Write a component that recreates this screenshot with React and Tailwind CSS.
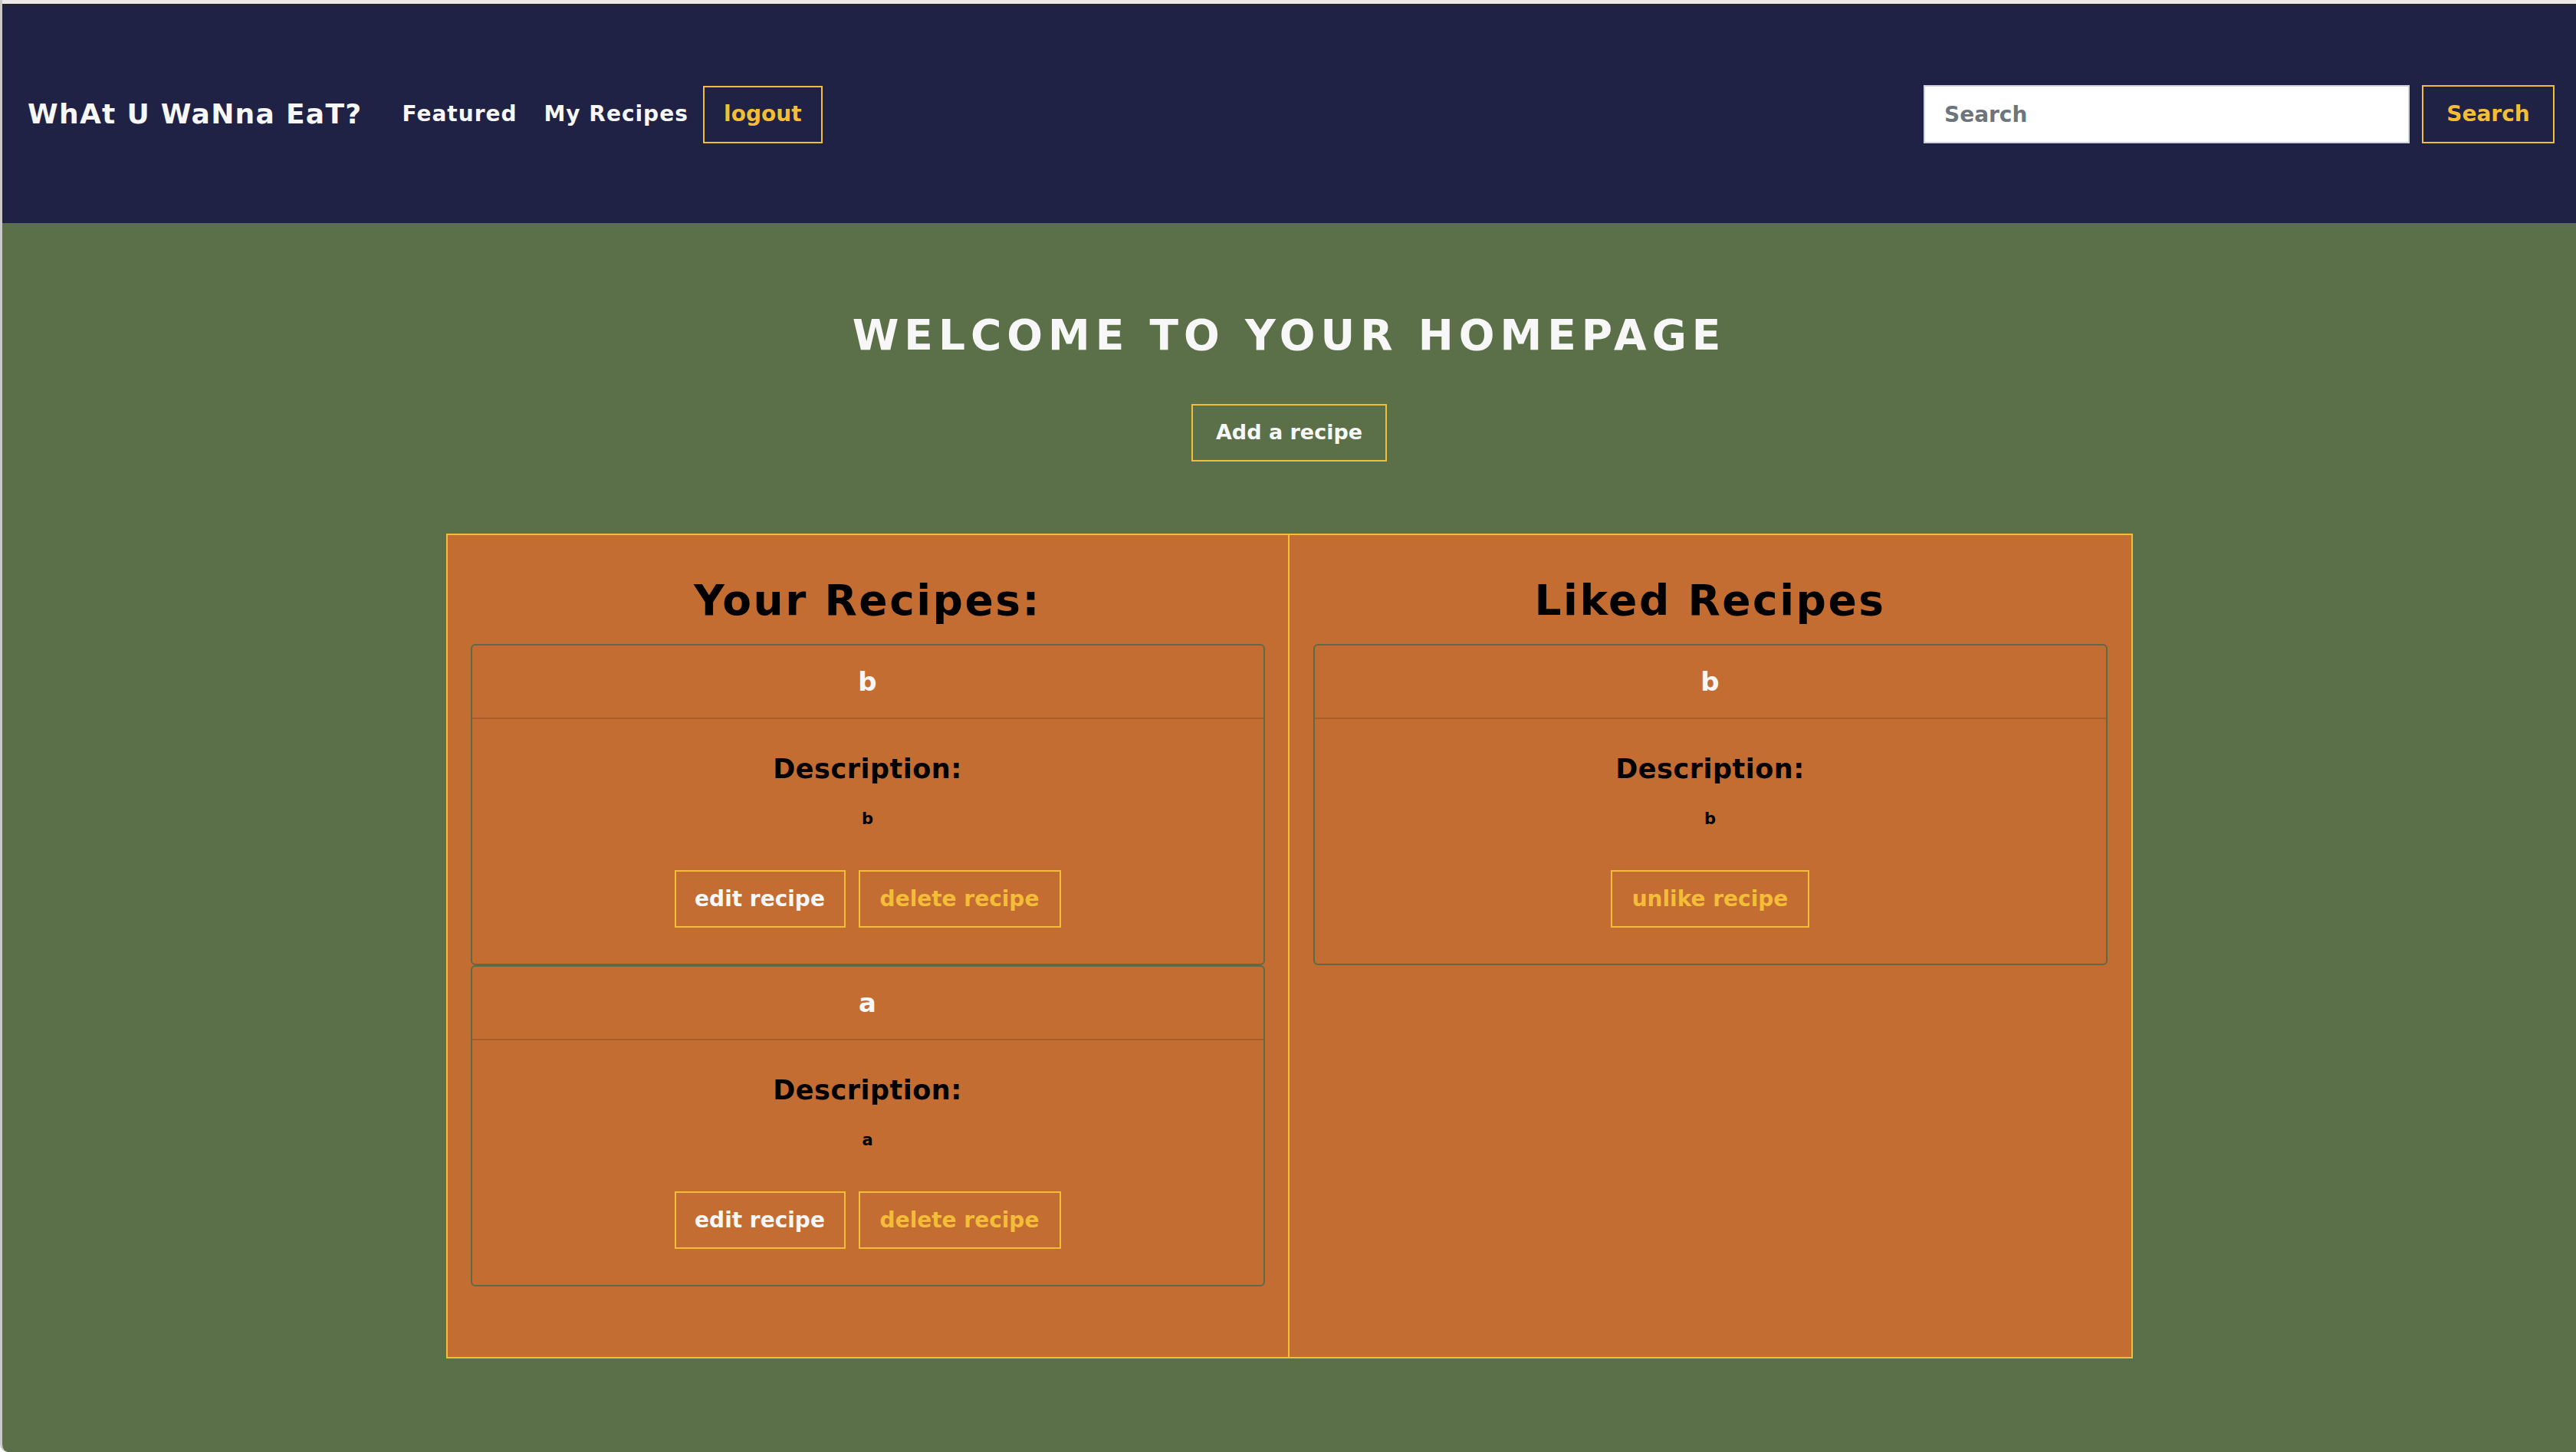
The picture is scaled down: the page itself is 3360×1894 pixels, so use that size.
import React from "react";

const font = { fontFamily: '"DejaVu Sans", Verdana, sans-serif' };

function RecipeCard({ title, desc, liked }) {
  return (
    <div className="w-full h-[419px] border-2 border-[#5b6b46] rounded-[6px] flex flex-col">
      <div className="h-[96px] shrink-0 flex items-center justify-center border-b-2 border-[#aa5d2b] text-[34px] font-bold text-[#f7f7f7]">
        {title}
      </div>
      <div className="flex flex-col items-center">
        <h5 className="mt-[44px] text-[35px] leading-[42px] font-bold text-black tracking-[0.5px]">
          Description:
        </h5>
        <p className="mt-[31px] text-[21px] leading-[26px] font-bold text-black">{desc}</p>
        <div className="mt-[54px] flex gap-[17px]">
          {liked ? (
            <button className="w-[259px] h-[75px] border-2 border-[#f4bd38] text-[28px] font-bold text-[#f4bd38]">
              unlike recipe
            </button>
          ) : (
            <>
              <button className="w-[223px] h-[75px] border-2 border-[#f4bd38] text-[28px] font-bold text-[#f7f7f7]">
                edit recipe
              </button>
              <button className="w-[264px] h-[75px] border-2 border-[#f4bd38] text-[28px] font-bold text-[#f4bd38]">
                delete recipe
              </button>
            </>
          )}
        </div>
      </div>
    </div>
  );
}

export default function App() {
  const yours = [
    { title: "b", desc: "b" },
    { title: "a", desc: "a" },
  ];

  return (
    <div className="min-h-screen w-full bg-white" style={font}>
      <div className="min-h-[1894px] flex flex-col border-l-[3px] border-[#c9c9c9] rounded-bl-[10px] overflow-hidden">
        {/* top strip */}
        <div className="h-[7px] bg-[#ece8e9] border-b-2 border-[#222]" />

        {/* navbar */}
        <nav className="h-[284px] bg-[#1f2244] flex items-center pl-[33px] pr-[28px]">
          <span className="text-[36px] font-bold text-[#f7f7f7] tracking-[1.3px]">WhAt U WaNna EaT?</span>
          <a className="ml-[52px] text-[28px] font-bold text-[#f7f7f7] tracking-[1px]">Featured</a>
          <a className="ml-[35px] text-[28px] font-bold text-[#f7f7f7] tracking-[1px]">My Recipes</a>
          <button className="ml-[19px] w-[156px] h-[75px] border-2 border-[#f4bd38] text-[28px] font-bold text-[#f4bd38]">
            logout
          </button>
          <div className="ml-auto flex items-center gap-[16px]">
            <input
              placeholder="Search"
              className="w-[634px] h-[76px] bg-white border-2 border-[#ced4da] px-[25px] text-[28px] font-bold text-[#6c757d] placeholder:text-[#6c757d] outline-none"
              style={font}
            />
            <button className="w-[173px] h-[76px] border-2 border-[#f4bd38] text-[28px] font-bold text-[#f4bd38]">
              Search
            </button>
          </div>
        </nav>

        {/* main */}
        <main className="flex-1 bg-[#5b7049] flex flex-col items-center pt-[114px] pb-[120px]">
          <h1 className="text-[55px] leading-[64px] font-bold text-[#f7f7f7] tracking-[7px]">
            WELCOME TO YOUR HOMEPAGE
          </h1>
          <button className="mt-[58px] w-[255px] h-[75px] border-2 border-[#f4bd38] text-[27px] font-bold text-[#f7f7f7]">
            Add a recipe
          </button>

          <div className="mt-[94px] w-[2200px] flex">
            <section className="w-1/2 h-[1076px] bg-[#c46d33] border-2 border-[#f4bd38] px-[30px] pt-[53px] flex flex-col items-center">
              <h2 className="text-[55px] leading-[64px] font-bold text-black tracking-[2.5px]">Your Recipes:</h2>
              <div className="mt-[25px] w-full flex flex-col">
                {yours.map((r) => (
                  <RecipeCard key={r.title} title={r.title} desc={r.desc} />
                ))}
              </div>
            </section>
            <section className="w-1/2 h-[1076px] bg-[#c46d33] border-2 border-l-0 border-[#f4bd38] px-[31px] pt-[53px] flex flex-col items-center">
              <h2 className="text-[55px] leading-[64px] font-bold text-black tracking-[2.5px]">Liked Recipes</h2>
              <div className="mt-[25px] w-full flex flex-col">
                <RecipeCard title="b" desc="b" liked />
              </div>
            </section>
          </div>
        </main>
      </div>
    </div>
  );
}
